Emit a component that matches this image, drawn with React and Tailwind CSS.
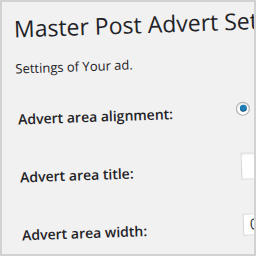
import React from 'react';

const rows = [
    { label: 'Advert area alignment:', kind: 'radio' },
    { label: 'Advert area title:', kind: 'text' },
    { label: 'Advert area width:', kind: 'width' },
];

const Field = ({ kind }) => {
    if (kind === 'radio') {
        return (
            <span className="mb-[7px] ml-[-3px] flex h-[14px] w-[14px] shrink-0 items-center justify-center rounded-full border border-[#a9aeb3] bg-white shadow-[inset_0_1px_2px_rgba(0,0,0,0.15)]">
                <span className="h-[7px] w-[7px] rounded-full bg-[#1e7fb8] shadow-[inset_0_-1px_1px_rgba(0,0,0,0.35)]" />
            </span>
        );
    }
    if (kind === 'text') {
        return (
            <div className="mb-[7px] h-[27px] w-[160px] shrink-0 border border-[#d6d6d6] bg-white shadow-[inset_0_1px_2px_rgba(0,0,0,0.07)]" />
        );
    }
    return (
        <div className="mb-[7px] flex h-[22px] w-[160px] shrink-0 items-center border border-[#d6d6d6] bg-white pl-[6px] text-[15px] leading-none text-[#32373c]">
            0
        </div>
    );
};

export default function App() {
    return (
        <div className="h-[256px] w-[256px] overflow-hidden border-2 border-[#d2d2d2] bg-[#f1f1f1] font-['Open_Sans',sans-serif] text-[#1f2327]">
            <div className="w-[420px] origin-top-left -rotate-2">
                <h1 className="pl-[11px] pt-[16px] text-[23px] font-normal leading-none whitespace-nowrap">
                    Master Post Advert Settings
                </h1>
                <p className="mt-[22px] pl-[11px] text-[13px] leading-none">Settings of Your ad.</p>
                <div className="mt-[15px] flex flex-col">
                    {rows.map(row => (
                        <div key={row.label} className="flex h-[58px] items-center">
                            <div className="w-[233px] shrink-0 pl-[12px] text-[14px] font-semibold leading-none">
                                {row.label}
                            </div>
                            <Field kind={row.kind} />
                        </div>
                    ))}
                </div>
            </div>
        </div>
    );
}
